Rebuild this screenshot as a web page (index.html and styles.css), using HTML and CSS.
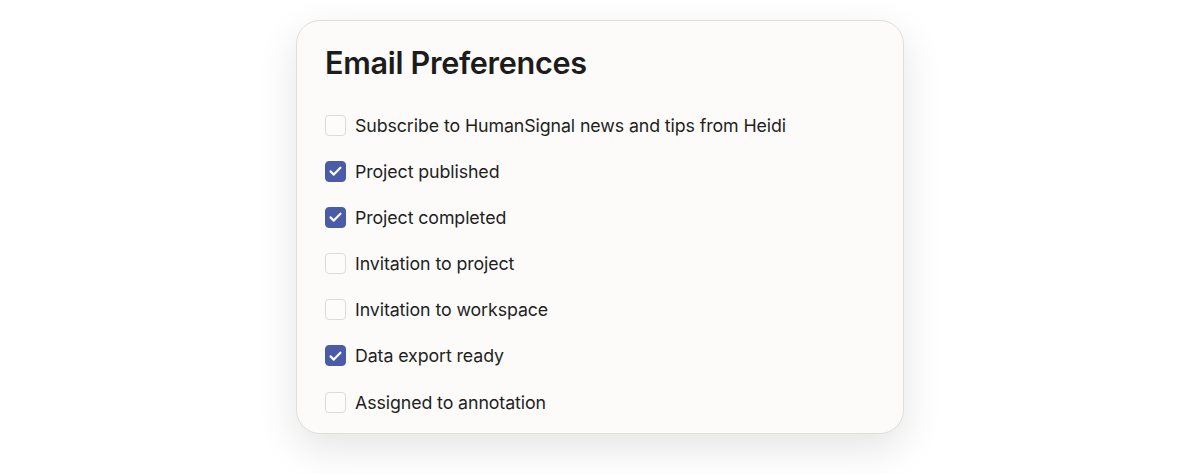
FILE: index.html
```html
<!DOCTYPE html>
<html>
<head>
<meta charset="utf-8">
<link rel="stylesheet" href="styles.css">
</head>
<body>
<div class="page">
  <section class="card">
    <h1 class="title">Email Preferences</h1>
    <ul class="list">
      <li class="item"><span class="box"></span><span class="label">Subscribe to HumanSignal news and tips from Heidi</span></li>
      <li class="item"><span class="box checked"><svg viewBox="0 0 20 20" width="20" height="20"><path d="M4.8 10.4l3.4 3.4 7-7.3" fill="none" stroke="#fff" stroke-width="2.3" stroke-linecap="round" stroke-linejoin="round"/></svg></span><span class="label">Project published</span></li>
      <li class="item"><span class="box checked"><svg viewBox="0 0 20 20" width="20" height="20"><path d="M4.8 10.4l3.4 3.4 7-7.3" fill="none" stroke="#fff" stroke-width="2.3" stroke-linecap="round" stroke-linejoin="round"/></svg></span><span class="label">Project completed</span></li>
      <li class="item"><span class="box"></span><span class="label">Invitation to project</span></li>
      <li class="item"><span class="box"></span><span class="label">Invitation to workspace</span></li>
      <li class="item"><span class="box checked"><svg viewBox="0 0 20 20" width="20" height="20"><path d="M4.8 10.4l3.4 3.4 7-7.3" fill="none" stroke="#fff" stroke-width="2.3" stroke-linecap="round" stroke-linejoin="round"/></svg></span><span class="label">Data export ready</span></li>
      <li class="item"><span class="box"></span><span class="label">Assigned to annotation</span></li>
    </ul>
  </section>
</div>
</body>
</html>
```
FILE: styles.css
```css
* { box-sizing: border-box; }
html, body { margin: 0; padding: 0; background: #ffffff; }
body { font-family: Inter, "Noto Sans", sans-serif; color: #1f1f1f; }
.page { display: flex; justify-content: center; padding-top: 20px; padding-bottom: 40px; }
.card {
  width: 608px;
  height: 414px;
  background: #fcfbf9;
  border: 1px solid #e2dfd8;
  border-radius: 24px;
  box-shadow: 0 14px 40px rgba(0,0,0,0.11);
  padding: 22px 28px 0 28px;
}
.title {
  margin: 0;
  font-size: 30.6px;
  font-weight: 600;
  letter-spacing: -0.3px;
  line-height: 40px;
  color: #1c1c1c;
}
.list { list-style: none; margin: 27px 0 0 0; padding: 0; display: flex; flex-direction: column; gap: 16.2px; }
.item { display: flex; align-items: center; gap: 9px; height: 30px; }
.box {
  width: 21px; height: 21px;
  border: 1px solid #dedbd3;
  border-radius: 4px;
  background: #fdfcfa;
  display: flex; align-items: center; justify-content: center;
  flex: none;
}
.box.checked { background: #4a5ba8; border-color: #4a5ba8; }
.label { font-size: 17.8px; color: #1f1f1f; letter-spacing: -0.1px; }
```
